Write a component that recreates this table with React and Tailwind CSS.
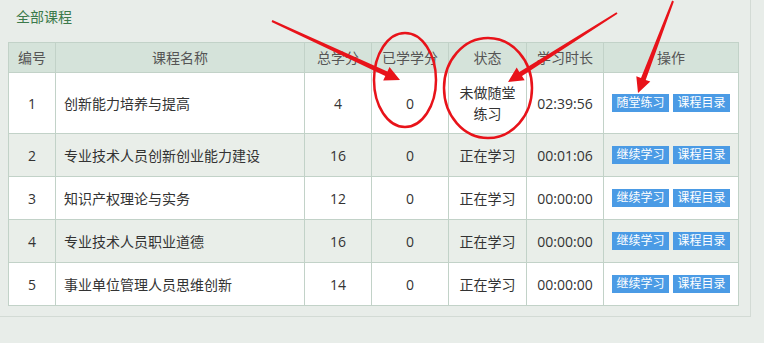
const courses = [
  { no: 1, name: "创新能力培养与提高", total: 4, done: 0, status: "未做随堂练习", time: "02:39:56", action: "随堂练习" },
  { no: 2, name: "专业技术人员创新创业能力建设", total: 16, done: 0, status: "正在学习", time: "00:01:06", action: "继续学习" },
  { no: 3, name: "知识产权理论与实务", total: 12, done: 0, status: "正在学习", time: "00:00:00", action: "继续学习" },
  { no: 4, name: "专业技术人员职业道德", total: 16, done: 0, status: "正在学习", time: "00:00:00", action: "继续学习" },
  { no: 5, name: "事业单位管理人员思维创新", total: 14, done: 0, status: "正在学习", time: "00:00:00", action: "继续学习" },
];

// tapered arrow polygon, thin at the tail, filled head at the tip
const arrowPoints = (x1, y1, x2, y2) => {
  const dx = x2 - x1;
  const dy = y2 - y1;
  const len = Math.hypot(dx, dy);
  const ux = dx / len;
  const uy = dy / len;
  const nx = -uy;
  const ny = ux;
  const headLen = 15;
  const headW = 7.5;
  const bx = x2 - ux * headLen;
  const by = y2 - uy * headLen;
  const pts = [
    [x1 + nx * 1, y1 + ny * 1],
    [bx + nx * 2.5, by + ny * 2.5],
    [bx + nx * headW, by + ny * headW],
    [x2, y2],
    [bx - nx * headW, by - ny * headW],
    [bx - nx * 2.5, by - ny * 2.5],
    [x1 - nx * 1, y1 - ny * 1],
  ];
  return pts.map((p) => p.map((v) => v.toFixed(1)).join(",")).join(" ");
};

const Annotations = () => (
  <svg className="absolute inset-0 pointer-events-none" width="764" height="343" viewBox="0 0 764 343">
    <ellipse cx="405" cy="80" rx="31" ry="47" fill="none" stroke="#e8131a" strokeWidth="2.5" />
    <ellipse cx="488" cy="88" rx="44" ry="50" fill="none" stroke="#e8131a" strokeWidth="2.5" />
    <polygon points={arrowPoints(272, 21, 400, 80)} fill="#e8131a" />
    <polygon points={arrowPoints(617, 13, 508, 82)} fill="#e8131a" />
    <polygon points={arrowPoints(673, 1, 638, 93)} fill="#e8131a" />
  </svg>
);

const App = () => {
  return (
    <div
      className="relative w-[764px] h-[343px] overflow-hidden bg-[#e8ede9]"
      style={{ fontFamily: '"Open Sans", "Noto Sans CJK SC", sans-serif' }}
    >
      <div className="w-[751px] h-[317px] border-r border-b border-[#d3dbd5] pl-[8px]">
        {/* Title */}
        <div className="h-[42px] pl-[8px] pt-[6px] text-[14px] leading-[22px] text-[#3b7a4b]">全部课程</div>

        {/* Table */}
        <table className="w-[731px] border-collapse text-[14px] text-[#333]">
          <thead>
            <tr className="h-[30px] bg-[#d5e3da] text-[#555]">
              <th className="w-[47px] border border-[#c2d2c8] font-normal">编号</th>
              <th className="w-[249px] border border-[#c2d2c8] font-normal">课程名称</th>
              <th className="w-[67px] border border-[#c2d2c8] font-normal">总学分</th>
              <th className="w-[77px] border border-[#c2d2c8] font-normal">已学学分</th>
              <th className="w-[78px] border border-[#c2d2c8] font-normal">状态</th>
              <th className="w-[77px] border border-[#c2d2c8] font-normal">学习时长</th>
              <th className="border border-[#c2d2c8] font-normal">操作</th>
            </tr>
          </thead>
          <tbody>
            {courses.map((c, i) => (
              <tr key={c.no} className={`${i === 0 ? "h-[61px]" : "h-[43px]"} ${i % 2 === 1 ? "bg-[#e9eee9]" : "bg-white"}`}>
                <td className="border border-[#c2d2c8] text-center">{c.no}</td>
                <td className="border border-[#c2d2c8] pl-[8px]">{c.name}</td>
                <td className="border border-[#c2d2c8] text-center">{c.total}</td>
                <td className="border border-[#c2d2c8] text-center">{c.done}</td>
                <td className="border border-[#c2d2c8] text-center px-[10px] leading-[21px]">{c.status}</td>
                <td className="border border-[#c2d2c8] text-center">{c.time}</td>
                <td className="border border-[#c2d2c8]">
                  <div className="flex justify-center gap-[4px]">
                    <button className="w-[57px] h-[18px] bg-[#4b9be5] text-white text-[12px] leading-[18px]">{c.action}</button>
                    <button className="w-[57px] h-[18px] bg-[#4b9be5] text-white text-[12px] leading-[18px]">课程目录</button>
                  </div>
                </td>
              </tr>
            ))}
          </tbody>
        </table>
      </div>
      <Annotations />
    </div>
  );
};

export default App;
